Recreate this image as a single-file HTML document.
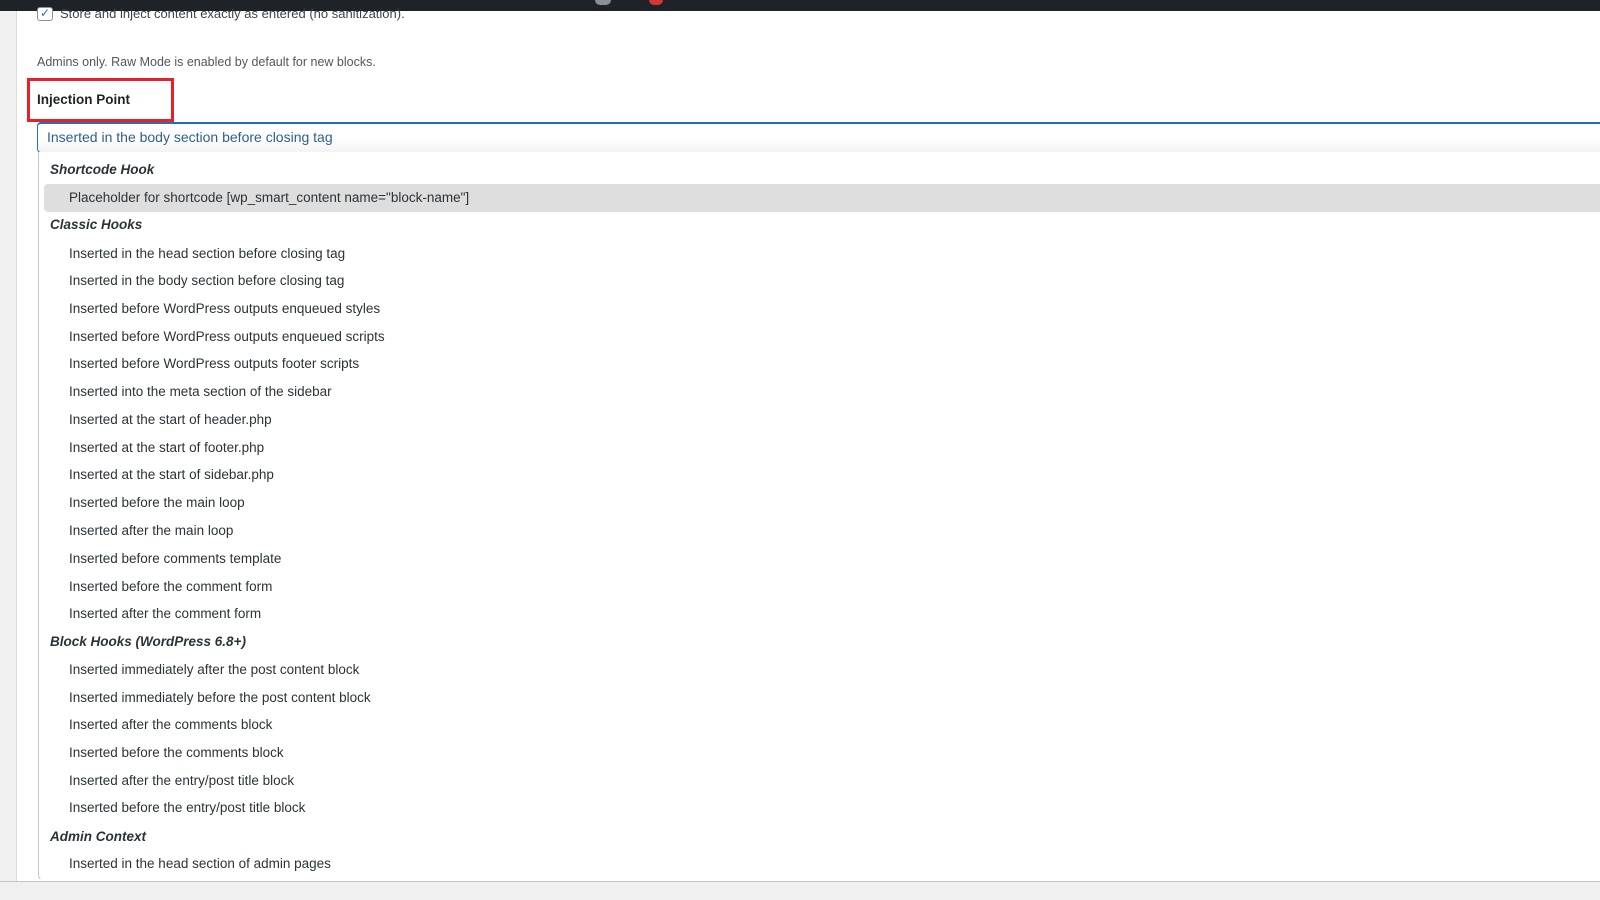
<!DOCTYPE html>
<html><head><meta charset="utf-8"><style>
*{margin:0;padding:0;box-sizing:border-box}
body{width:1600px;height:900px;overflow:hidden;background:#fff;font-family:"Liberation Sans",sans-serif;font-size:13px;color:#3c434a;position:relative}
.bar{position:absolute;left:0;top:0;width:1600px;height:11px;background:#1d2327}
.side{position:absolute;left:0;top:11px;width:17px;height:889px;background:#f0f0f1;border-right:1px solid #dcdcde}
.bottom{position:absolute;left:0;top:881px;width:1600px;height:19px;background:#f0f0f1;border-top:1px solid #c3c4c7}
.t{position:absolute;white-space:nowrap}
.redbox{position:absolute;left:27px;top:78px;width:147px;height:44px;border:3px solid #e8202a}
.sel{position:absolute;left:37px;top:122px;width:1570px;height:31px;border:1px solid #2271b1;border-top:2px solid #2271b1;border-radius:4px 0 0 4px;background:linear-gradient(#fff 50%,#f3f3f3);color:#2c5f8f;font-size:14px;padding:5px 9px}
.dd{position:absolute;left:38px;top:152px;width:1570px;height:729px;background:#fff;border:1px solid #c3c4c7;border-radius:0 0 0 6px;border-top:none}
.row{position:absolute;left:0;height:27.75px;line-height:27.75px;width:1570px;font-size:13.5px;color:#2c3338}
.row.g{font-weight:bold;font-style:italic;padding-left:11px;color:#2c3338}
.row.o{padding-left:30px}
.row.h{background:#dedede;left:5px;padding-left:25px;border-radius:4px 0 0 4px}
</style></head><body>
<div class="bar">
<div style="position:absolute;left:595px;top:0;width:16px;height:5px;background:#8c8f94;border-radius:0 0 8px 8px"></div>
<div style="position:absolute;left:649px;top:0;width:14px;height:5px;background:#d63638;border-radius:0 0 7px 7px"></div>
</div>
<div class="side"></div>
<div class="t" style="left:37px;top:7px;width:16px;height:14px;border:1px solid #8c8f94;border-radius:3px;background:#fff;color:#2271b1;font-size:12px;line-height:10px;text-align:center">✓</div>
<div class="t" style="left:60px;top:6px;font-size:13px;color:#3c434a">Store and inject content exactly as entered (no sanitization).</div>
<div class="t" style="left:37px;top:55px;font-size:12.5px;color:#50575e">Admins only. Raw Mode is enabled by default for new blocks.</div>
<div class="redbox"></div>
<div class="t" style="left:37px;top:92px;font-size:13.5px;font-weight:bold;color:#1d2327">Injection Point</div>
<div class="sel">Inserted in the body section before closing tag</div>
<div class="dd">
<div class="row g" style="top:4px">Shortcode Hook</div>
<div class="row h" style="top:32px">Placeholder for shortcode [wp_smart_content name="block-name"]</div>
<div class="row g" style="top:59px">Classic Hooks</div>
<div class="row o" style="top:88px">Inserted in the head section before closing tag</div>
<div class="row o" style="top:115px">Inserted in the body section before closing tag</div>
<div class="row o" style="top:143px">Inserted before WordPress outputs enqueued styles</div>
<div class="row o" style="top:171px">Inserted before WordPress outputs enqueued scripts</div>
<div class="row o" style="top:198px">Inserted before WordPress outputs footer scripts</div>
<div class="row o" style="top:226px">Inserted into the meta section of the sidebar</div>
<div class="row o" style="top:254px">Inserted at the start of header.php</div>
<div class="row o" style="top:282px">Inserted at the start of footer.php</div>
<div class="row o" style="top:309px">Inserted at the start of sidebar.php</div>
<div class="row o" style="top:337px">Inserted before the main loop</div>
<div class="row o" style="top:365px">Inserted after the main loop</div>
<div class="row o" style="top:393px">Inserted before comments template</div>
<div class="row o" style="top:421px">Inserted before the comment form</div>
<div class="row o" style="top:448px">Inserted after the comment form</div>
<div class="row g" style="top:476px">Block Hooks (WordPress 6.8+)</div>
<div class="row o" style="top:504px">Inserted immediately after the post content block</div>
<div class="row o" style="top:532px">Inserted immediately before the post content block</div>
<div class="row o" style="top:559px">Inserted after the comments block</div>
<div class="row o" style="top:587px">Inserted before the comments block</div>
<div class="row o" style="top:615px">Inserted after the entry/post title block</div>
<div class="row o" style="top:642px">Inserted before the entry/post title block</div>
<div class="row g" style="top:671px">Admin Context</div>
<div class="row o" style="top:698px">Inserted in the head section of admin pages</div>
</div>
<div class="bottom" style="left:0"></div>
<div style="position:absolute;left:38px;top:879px;width:1570px;height:2px;background:#fff"></div>
</body></html>
